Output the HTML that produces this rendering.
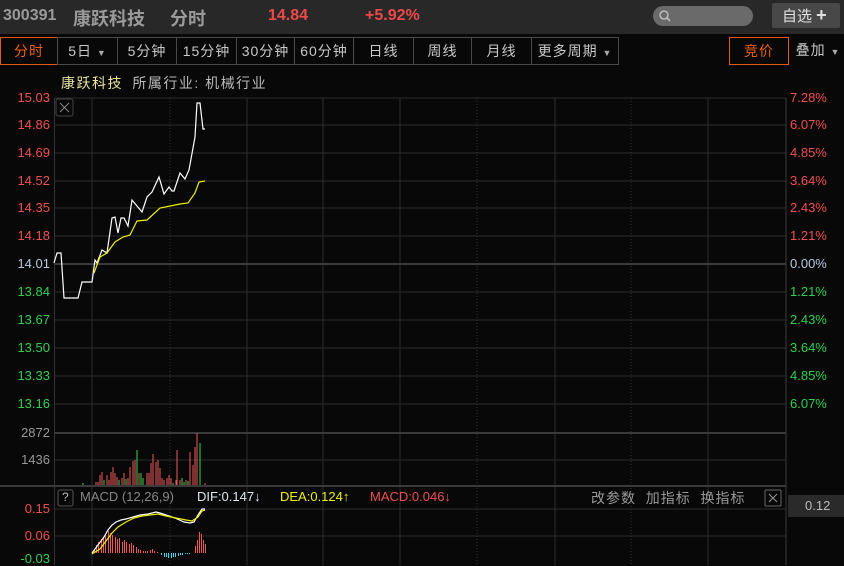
<!DOCTYPE html>
<html><head><meta charset="utf-8"><style>
*{margin:0;padding:0;box-sizing:border-box}
body{width:844px;height:565px;background:#080808;overflow:hidden;position:relative;font-family:"Liberation Sans","Noto Sans CJK SC",sans-serif}
.a{position:absolute;white-space:nowrap}
.hdr{left:0;top:0;width:844px;height:34px;background:#282828}
.tab{position:absolute;top:37px;height:28px;border:1px solid #4a4a4a;color:#c8c8c8;font-size:14px;line-height:26px;text-align:center;letter-spacing:1px}
.l{font-size:13px;right:794px;text-align:right}
.r{font-size:13px;left:790px}
</style></head><body>
<div class="a hdr"></div>
<div class="a" style="left:3px;top:7px;font-size:16px;font-weight:bold;color:#9a9a9a">300391</div>
<div class="a" style="left:73px;top:5px;font-size:18px;font-weight:bold;color:#9a9a9a">康跃科技</div>
<div class="a" style="left:170px;top:5px;font-size:18px;font-weight:bold;color:#9a9a9a">分时</div>
<div class="a" style="left:268px;top:7px;font-size:16px;font-weight:bold;color:#f04848">14.84</div>
<div class="a" style="left:365px;top:7px;font-size:16px;font-weight:bold;color:#f04848">+5.92%</div>
<div class="a" style="left:653px;top:6px;width:100px;height:20px;border-radius:10px;background:#6a6a6a"></div>
<svg class="a" style="left:658px;top:9px" width="16" height="14"><circle cx="6" cy="6" r="4" fill="none" stroke="#bbb" stroke-width="1.5"/><line x1="9" y1="9" x2="12" y2="12" stroke="#bbb" stroke-width="1.8"/></svg>
<div class="a" style="left:772px;top:3px;width:68px;height:25px;background:#484848;border-radius:2px;color:#e0e0e0;font-size:15px;line-height:25px;padding-left:10px">自选 <b style="font-size:18px">+</b></div>

<div class="tab" style="left:0;width:58px;border-color:#e05a10;color:#f06010">分时</div>
<div class="tab" style="left:57px;width:61px">5日 <span style="font-size:9px;color:#aaa">▼</span></div>
<div class="tab" style="left:117px;width:60px">5分钟</div>
<div class="tab" style="left:176px;width:61px">15分钟</div>
<div class="tab" style="left:236px;width:59px">30分钟</div>
<div class="tab" style="left:294px;width:60px">60分钟</div>
<div class="tab" style="left:353px;width:61px">日线</div>
<div class="tab" style="left:413px;width:59px">周线</div>
<div class="tab" style="left:471px;width:61px">月线</div>
<div class="tab" style="left:531px;width:88px">更多周期 <span style="font-size:9px;color:#aaa">▼</span></div>
<div class="tab" style="left:729px;width:60px;border-color:#e05a10;color:#f06010">竞价</div>
<div class="tab" style="left:788px;width:60px;border:none">叠加 <span style="font-size:9px;color:#aaa">▼</span></div>

<div class="a" style="left:61px;top:73px;font-size:14px;letter-spacing:1.5px;color:#e8e4a0">康跃科技 <span style="color:#bbb;margin-left:4px">所属行业: 机械行业</span></div>

<svg class="a" style="left:0;top:0" width="844" height="565">
<g stroke="#2c2c2c" stroke-width="1">
<line x1="54" y1="98" x2="786" y2="98"/>
<line x1="54" y1="125" x2="786" y2="125"/><line x1="54" y1="153" x2="786" y2="153"/><line x1="54" y1="181" x2="786" y2="181"/><line x1="54" y1="208" x2="786" y2="208"/><line x1="54" y1="236" x2="786" y2="236"/>
<line x1="54" y1="292" x2="786" y2="292"/><line x1="54" y1="320" x2="786" y2="320"/><line x1="54" y1="348" x2="786" y2="348"/><line x1="54" y1="376" x2="786" y2="376"/><line x1="54" y1="404" x2="786" y2="404"/>
<line x1="54" y1="460" x2="786" y2="460"/>
<line x1="54" y1="536" x2="786" y2="536"/>
<line x1="92" y1="98" x2="92" y2="565"/><line x1="247" y1="98" x2="247" y2="565"/><line x1="323" y1="98" x2="323" y2="565"/><line x1="400" y1="98" x2="400" y2="565"/><line x1="555" y1="98" x2="555" y2="565"/><line x1="708" y1="98" x2="708" y2="565"/>
</g>
<g stroke="#333" stroke-width="1" stroke-dasharray="1,2">
<line x1="170" y1="98" x2="170" y2="565"/><line x1="477" y1="98" x2="477" y2="565"/><line x1="631" y1="98" x2="631" y2="565"/>
</g>
<g stroke="#3a3a3a" stroke-width="2">
<line x1="54" y1="264" x2="786" y2="264"/><line x1="54" y1="433" x2="786" y2="433"/><line x1="0" y1="486" x2="786" y2="486"/>
</g>
<line x1="54.5" y1="98" x2="54.5" y2="565" stroke="#333"/>
<line x1="786" y1="98" x2="786" y2="565" stroke="#3a3a3a"/>
<line x1="54" y1="509" x2="786" y2="509" stroke="#2c2c2c"/>
<rect x="56" y="99" width="17" height="17" rx="2" fill="none" stroke="#444"/>
<path d="M60 103l9 9M69 103l-9 9" stroke="#888" stroke-width="1"/>
<polyline fill="none" stroke="#fff" stroke-width="1.2" points="54,263 57,253 61,253 64,298 78,298 82,282 92,282 95,260 97,263 102,250 107,253 112,218 115,217 118,233 121,218 124,218 128,226 132,200 142,212 147,197 152,192 159,177 164,194 169,187 172,191 174,191 180,173 185,179 189,170 195,137 197,103 200,103 203,129 205,129"/>
<polyline fill="none" stroke="#f0f000" stroke-width="1.2" points="94,273 100,257 107,253 115,242 123,237 130,235 137,221 147,220 160,208 180,204 188,203 195,193 199,182 205,181"/>
<g stroke-width="1" shape-rendering="crispEdges">
<g stroke="#f05858">
<path d="M96 485V482M98 485V482M100 485V475M102 485V472M107 485V475M109 485V480M111 485V472M113 485V467M115 485V473M117 485V477M122 485V478M124 485V473M128 485V478M130 485V467M133 485V461M135 485V460M139 485V473M147 485V473M149 485V473M151 485V463M153 485V454M156 485V462M158 485V460M160 485V468M162 485V478M164 485V480M167 485V478M169 485V475M171 485V478M176 485V480M177 485V450M180 485V480M186 485V480M190 485V452M193 485V465M195 485V447M197 485V433M205 485V483"/>
</g>
<g stroke="#30d850">
<path d="M83 485V483M104 485V480M119 485V480M126 485V479M137 485V450M141 485V473M143 485V478M173 485V483M182 485V478M184 485V482M188 485V481M200 485V443"/>
</g>
</g>
<g stroke-width="1" stroke="#f05858" shape-rendering="crispEdges">
<path d="M94.5 553V550M96.5 553V545M98.5 553V542M101.5 553V539M103.5 553V537M105.5 553V535M108.5 553V531M110.5 553V533M112.5 553V535M115.5 553V537M117.5 553V539M119.5 553V538M122.5 553V542M124.5 553V540M126.5 553V542M129.5 553V544M131.5 553V543M133.5 553V545M136.5 553V547M138.5 553V549M140.5 553V550M143.5 553V551M145.5 553V551M147.5 553V551M150.5 553V550M152.5 553V549M154.5 553V551M157.5 553V552M195.5 553V546M197.5 553V540M199.5 553V532M201.5 553V534M203.5 553V540M205.5 553V544"/>
</g>
<g stroke-width="1" stroke="#30d8e8" shape-rendering="crispEdges">
<path d="M161.5 553V555M164.5 553V557M166.5 553V557M168.5 553V558M171.5 553V558M173.5 553V557M175.5 553V557M178.5 553V556M180.5 553V555M182.5 553V555M185.5 553V554M187.5 553V554M189.5 553V554"/>
</g>
<polyline fill="none" stroke="#fff" stroke-width="1.2" points="92,553 98,545 104,537 108,530 112,525 116,522 121,520 126,519 133,517 140,515 148,514 156,512 160,513 166,515 175,518 184,522 190,523 194,522 198,515 202,509 205,509"/>
<polyline fill="none" stroke="#f0f000" stroke-width="1.2" points="92,554 100,549 106,541 112,533 118,527 126,522 134,518 142,516 150,515 158,514 166,516 176,518 186,520 192,521 198,517 202,511 205,510"/>
<rect x="58" y="490" width="15" height="16" rx="2" fill="none" stroke="#555"/>
<rect x="765" y="490" width="16" height="16" rx="1" fill="none" stroke="#666"/>
<path d="M769 494l8 8M777 494l-8 8" stroke="#999" stroke-width="1"/>
<rect x="788" y="495" width="56" height="22" fill="#2a2a2a"/>
</svg>

<div class="a l" style="top:90px;color:#f05050">15.03</div>
<div class="a l" style="top:117px;color:#f05050">14.86</div>
<div class="a l" style="top:145px;color:#f05050">14.69</div>
<div class="a l" style="top:173px;color:#f05050">14.52</div>
<div class="a l" style="top:200px;color:#f05050">14.35</div>
<div class="a l" style="top:228px;color:#f05050">14.18</div>
<div class="a l" style="top:256px;color:#b8c8e0">14.01</div>
<div class="a l" style="top:284px;color:#30d050">13.84</div>
<div class="a l" style="top:312px;color:#30d050">13.67</div>
<div class="a l" style="top:340px;color:#30d050">13.50</div>
<div class="a l" style="top:368px;color:#30d050">13.33</div>
<div class="a l" style="top:396px;color:#30d050">13.16</div>
<div class="a l" style="top:425px;color:#999">2872</div>
<div class="a l" style="top:452px;color:#999">1436</div>
<div class="a l" style="top:501px;color:#f05050">0.15</div>
<div class="a l" style="top:528px;color:#f05050">0.06</div>
<div class="a l" style="top:551px;color:#30d050">-0.03</div>

<div class="a r" style="top:90px;color:#f05050">7.28%</div>
<div class="a r" style="top:117px;color:#f05050">6.07%</div>
<div class="a r" style="top:145px;color:#f05050">4.85%</div>
<div class="a r" style="top:173px;color:#f05050">3.64%</div>
<div class="a r" style="top:200px;color:#f05050">2.43%</div>
<div class="a r" style="top:228px;color:#f05050">1.21%</div>
<div class="a r" style="top:256px;color:#b8c8e0">0.00%</div>
<div class="a r" style="top:284px;color:#30d050">1.21%</div>
<div class="a r" style="top:312px;color:#30d050">2.43%</div>
<div class="a r" style="top:340px;color:#30d050">3.64%</div>
<div class="a r" style="top:368px;color:#30d050">4.85%</div>
<div class="a r" style="top:396px;color:#30d050">6.07%</div>
<div class="a" style="left:805px;top:498px;font-size:13px;color:#bbb">0.12</div>

<div class="a" style="left:62px;top:490px;font-size:12px;color:#bbb">?</div>
<div class="a" style="left:80px;top:489px;font-size:13px;color:#888">MACD (12,26,9)</div>
<div class="a" style="left:197px;top:489px;font-size:13px;color:#dde6f0">DIF:0.147↓</div>
<div class="a" style="left:280px;top:489px;font-size:13px;color:#f0f000">DEA:0.124↑</div>
<div class="a" style="left:370px;top:489px;font-size:13px;color:#f05050">MACD:0.046↓</div>
<div class="a" style="left:591px;top:488px;font-size:14px;letter-spacing:1px;color:#999">改参数 &nbsp;加指标 &nbsp;换指标</div>
</body></html>
